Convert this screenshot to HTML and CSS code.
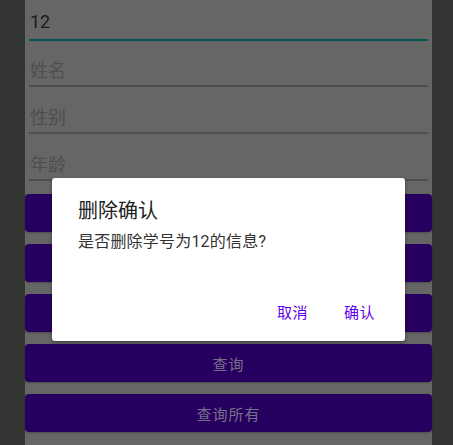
FILE: index.html
```html
<!DOCTYPE html>
<html>
<head>
<meta charset="utf-8">
<link rel="stylesheet" href="styles.css">
</head>
<body>
<div class="screen">
  <div class="app">
    <div class="field first focused"><span class="value">12</span></div>
    <div class="field second"><span class="hint">姓名</span></div>
    <div class="field"><span class="hint">性别</span></div>
    <div class="field"><span class="hint">年龄</span></div>
    <div class="buttons">
      <div class="btn"></div>
      <div class="btn"></div>
      <div class="btn"></div>
      <div class="btn">查询</div>
      <div class="btn">查询所有</div>
    </div>
  </div>
</div>
<div class="dialog">
  <div class="title">删除确认</div>
  <div class="message">是否删除学号为12的信息?</div>
  <div class="actions">
    <span class="action">取消</span>
    <span class="action">确认</span>
  </div>
</div>
</body>
</html>
```
FILE: styles.css
```css
html, body {
  margin: 0;
  padding: 0;
}
body {
  width: 453px;
  height: 445px;
  overflow: hidden;
  background: #333533;
  font-family: Roboto, "Noto Sans CJK SC", sans-serif;
  position: relative;
}
.screen {
  display: flex;
  height: 445px;
}
.app {
  margin-left: 25px;
  width: 407px;
  background: #666666;
  display: flex;
  flex-direction: column;
  padding: 0 4px;
  box-sizing: border-box;
}
.field {
  height: 47px;
  box-sizing: border-box;
  border-bottom: 2px solid #4e4e4e;
  display: flex;
  align-items: flex-end;
  padding-left: 1px;
  padding-bottom: 3px;
  font-size: 18px;
}
.field.first {
  height: 41px;
  padding-bottom: 6px;
}
.field.second {
  height: 46px;
}
.field.focused {
  border-bottom: 2px solid #00574f;
}
.value {
  color: #1a1a1a;
  line-height: 22px;
}
.hint {
  color: #4f4f4f;
  line-height: 22px;
}
.buttons {
  margin: 7px -4px 0;
  display: flex;
  flex-direction: column;
}
.btn {
  height: 38px;
  margin: 6px 0;
  background: #27005f;
  border-radius: 4px;
  box-shadow: 0 1px 2px rgba(0,0,0,0.25);
  color: #77718a;
  font-size: 15px;
  letter-spacing: 1px;
  display: flex;
  align-items: center;
  justify-content: center;
}
.dialog {
  position: absolute;
  left: 52px;
  top: 178px;
  width: 353px;
  height: 163px;
  background: #ffffff;
  border-radius: 3px;
  box-shadow: 0 2px 4px rgba(0,0,0,0.35);
  box-sizing: border-box;
  padding: 21px 26px 0 26px;
  display: flex;
  flex-direction: column;
}
.title {
  font-size: 20px;
  color: #212121;
  line-height: 24px;
}
.message {
  margin-top: 9px;
  font-size: 16px;
  color: #333333;
  line-height: 20px;
  letter-spacing: 0.2px;
}
.actions {
  margin-top: auto;
  margin-bottom: 19px;
  margin-right: 4px;
  display: flex;
  justify-content: flex-end;
  gap: 36px;
}
.action {
  font-size: 15px;
  letter-spacing: 0.5px;
  color: #6200ee;
  line-height: 18px;
}
```
